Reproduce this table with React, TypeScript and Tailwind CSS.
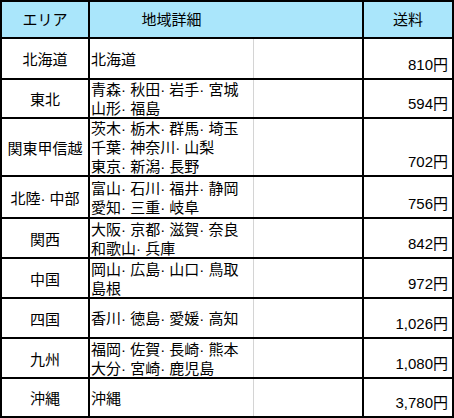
import { Fragment } from "react";

const rows: { area: string; lines: string[]; fee: string }[] = [
  { area: "北海道", lines: ["北海道"], fee: "810円" },
  { area: "東北", lines: ["青森· 秋田· 岩手· 宮城", "山形· 福島"], fee: "594円" },
  {
    area: "関東甲信越",
    lines: ["茨木· 栃木· 群馬· 埼玉", "千葉· 神奈川· 山梨", "東京· 新潟· 長野"],
    fee: "702円",
  },
  { area: "北陸· 中部", lines: ["富山· 石川· 福井· 静岡", "愛知· 三重· 岐阜"], fee: "756円" },
  { area: "関西", lines: ["大阪· 京都· 滋賀· 奈良", "和歌山· 兵庫"], fee: "842円" },
  { area: "中国", lines: ["岡山· 広島· 山口· 鳥取", "島根"], fee: "972円" },
  { area: "四国", lines: ["香川· 徳島· 愛媛· 高知"], fee: "1,026円" },
  { area: "九州", lines: ["福岡· 佐賀· 長崎· 熊本", "大分· 宮崎· 鹿児島"], fee: "1,080円" },
  { area: "沖縄", lines: ["沖縄"], fee: "3,780円" },
];

export default function App() {
  return (
    <div
      className="w-[454px] h-[418px] bg-white text-black text-[15px] leading-[19px]"
      style={{ fontFamily: '"Liberation Sans", "Noto Sans CJK JP", sans-serif' }}
    >
      <div className="grid grid-cols-[86px_272px_88px] grid-rows-[35px_39px_37px_56px_40px_38px_38px_38px_38px_37px] gap-[2px] p-[2px] bg-black">
        {/* header */}
        <div className="bg-[#aae6fb] flex items-center justify-center">エリア</div>
        <div className="bg-[#aae6fb] flex items-center">
          <div className="w-[163px] text-center">地域詳細</div>
        </div>
        <div className="bg-[#aae6fb] flex items-center justify-center">送料</div>

        {rows.map((r) => (
          <Fragment key={r.area}>
            <div className="bg-white flex items-center justify-center pt-[2px]">{r.area}</div>
            <div className="bg-white flex">
              <div className="w-[163px] flex flex-col justify-center pl-[1px] pt-[1px]">
                {r.lines.map((l) => (
                  <div key={l} className="whitespace-nowrap">
                    {l}
                  </div>
                ))}
              </div>
              <div className="flex-1 border-l border-[#d4d4d4]" />
            </div>
            <div className="bg-white flex items-end justify-end pr-[4px] pb-[4px]">{r.fee}</div>
          </Fragment>
        ))}
      </div>
    </div>
  );
}
